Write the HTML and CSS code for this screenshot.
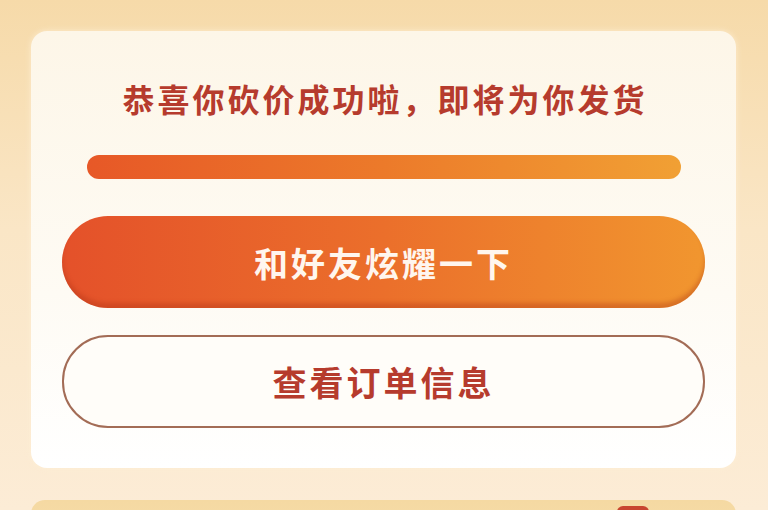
FILE: index.html
```html
<!DOCTYPE html>
<html lang="zh-CN">
<head>
<meta charset="utf-8">
<link rel="stylesheet" href="styles.css">
</head>
<body>
<div class="page">
  <div class="card">
    <div class="title">恭喜你砍价成功啦，即将为你发货</div>
    <div class="bar"></div>
    <div class="btn btn-primary">和好友炫耀一下</div>
    <div class="btn btn-outline">查看订单信息</div>
  </div>
  <div class="card2">
    <span class="badge"></span>
  </div>
</div>
</body>
</html>
```
FILE: styles.css
```css
html, body {
  margin: 0;
  padding: 0;
}
body {
  width: 768px;
  height: 510px;
  overflow: hidden;
  font-family: "Noto Sans CJK SC", "Noto Sans", sans-serif;
  background: linear-gradient(180deg, #f6daa9 0%, #fae6c6 45%, #fcecd6 100%);
}
.page {
  height: 510px;
  box-sizing: border-box;
  overflow: hidden;
  padding: 31px 32px 0 31px;
  display: flex;
  flex-direction: column;
}
.card {
  flex: none;
  background: linear-gradient(180deg, #fdf6e8 0%, #fefbf4 60%, #ffffff 100%);
  border-radius: 16px;
  padding: 50px 31px 40px;
  display: flex;
  flex-direction: column;
  box-shadow: 0 0 6px rgba(255, 240, 215, 0.8);
}
.title {
  text-align: center;
  font-size: 32px;
  line-height: 34px;
  font-weight: 700;
  color: #b63b2d;
  letter-spacing: 3px;
  padding-left: 3px;
}
.bar {
  margin: 40px 24px 0 25px;
  height: 24px;
  border-radius: 12px;
  background: linear-gradient(90deg, #e75827 0%, #ec7a2a 50%, #f1a034 100%);
}
.btn {
  height: 92px;
  border-radius: 46px;
  display: flex;
  align-items: center;
  justify-content: center;
  font-size: 34px;
  font-weight: 700;
  letter-spacing: 3px;
  box-sizing: border-box;
}
.btn-primary {
  margin-top: 37px;
  color: #fff6ee;
  background: linear-gradient(90deg, #e4512a 0%, #eb6f2b 50%, #f1962f 100%);
  box-shadow: inset 0 -5px 4px rgba(170, 50, 20, 0.35);
}
.btn-outline {
  margin-top: 27px;
  height: 93px;
  color: #b63b2d;
  background: #fffdf9;
  border: 2px solid #a36c56;
}
.card2 {
  flex: none;
  margin-top: 32px;
  height: 40px;
  border-radius: 14px;
  background: linear-gradient(180deg, #f5d9a2, #f6dcaa);
  position: relative;
}
.badge {
  position: absolute;
  left: 586px;
  top: 6px;
  width: 32px;
  height: 14px;
  border-radius: 6px 6px 0 0;
  background: #c8452f;
}
```
